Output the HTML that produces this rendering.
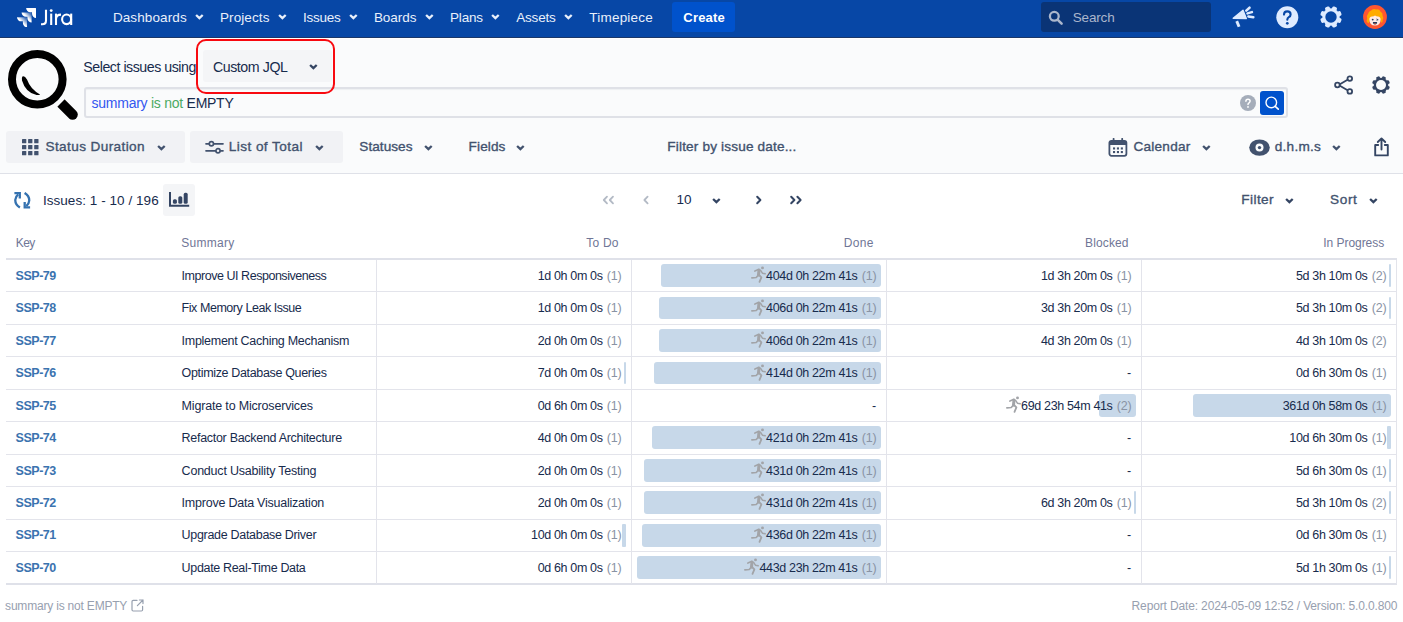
<!DOCTYPE html>
<html><head><meta charset="utf-8"><title>Timepiece - Status Duration</title>
<style>
html,body{margin:0;padding:0}
body{width:1403px;height:622px;overflow:hidden;background:#fff;position:relative;font-family:"Liberation Sans",sans-serif;}
.abs,.t,.bar,.hl,.vl,.run,svg.i{position:absolute}
.t{white-space:pre;line-height:18px;height:18px}
.nav{left:0;top:0;width:1403px;height:37px;background:#0747A6}
.navline{left:0;top:37px;width:1403px;height:1px;background:#1B3768}
.sub{left:0;top:39px;width:1403px;height:134px;background:#FAFBFC}
.subline{left:0;top:173px;width:1403px;height:1px;background:#DFE1E8}
.btn{background:#F1F2F5;border-radius:3px}
.bar{background:#C7D8E9;border-radius:3px}
.hl{left:6px;width:1391px;height:1px;background:#E3E4EB}
.vl{width:1px;top:260px;height:324px;background:#E3E4EB}
</style></head><body>
<svg width="0" height="0" style="position:absolute"><defs>
<symbol id="chev" viewBox="0 0 9 6"><path d="M1.1 1.0 L4.4 4.2 L7.7 1.0" fill="none" stroke="currentColor" stroke-width="2.3" stroke-linecap="butt" stroke-linejoin="miter"/></symbol>
<symbol id="runner" viewBox="0 0 15 17"><g fill="none" stroke="#A2A4A8" stroke-linecap="round" stroke-linejoin="round"><circle cx="11.5" cy="1.9" r="1.45" fill="#A2A4A8" stroke="none"/><path d="M8 4 L7.5 9" stroke-width="3"/><path d="M3.9 5.1 L7.4 3.5" stroke-width="1.6"/><path d="M9.6 4.3 L11.4 7.2 L14.2 7.8" stroke-width="1.5"/><path d="M7.2 9.4 L5.2 11.5 L0.9 11.9" stroke-width="1.7"/><path d="M8 9 L10.4 11.4 L8.5 15.8" stroke-width="1.8"/></g></symbol>
</defs></svg>

<div class="abs nav"></div><div class="abs navline"></div>
<div class="abs sub"></div><div class="abs subline"></div>

<!-- jira logo -->
<svg class="i" style="left:16.9px;top:8.2px" width="19.2" height="19.2" viewBox="0.7 0.68 21.2 21.2">
<defs><linearGradient id="jg1" x1="15.6" y1="5.8" x2="11.2" y2="10.3" gradientUnits="userSpaceOnUse"><stop offset="0.18" stop-color="#fff" stop-opacity="0.25"/><stop offset="1" stop-color="#fff"/></linearGradient>
<linearGradient id="jg2" x1="10.7" y1="10.9" x2="5.7" y2="15.8" gradientUnits="userSpaceOnUse"><stop offset="0.18" stop-color="#fff" stop-opacity="0.25"/><stop offset="1" stop-color="#fff"/></linearGradient></defs>
<path fill="#fff" d="M21.016.683H10.812a4.607 4.607 0 004.607 4.604h1.88v1.818a4.607 4.607 0 004.607 4.604V1.569a.886.886 0 00-.89-.886z"/>
<path fill="url(#jg1)" d="M15.967 5.768H5.762a4.607 4.607 0 004.607 4.607h1.88v1.815a4.607 4.607 0 004.604 4.604V6.654a.886.886 0 00-.886-.886z"/>
<path fill="url(#jg2)" d="M10.914 10.85H.71a4.607 4.607 0 004.607 4.607h1.886v1.812a4.607 4.607 0 004.598 4.604V11.736a.886.886 0 00-.886-.886z"/>
</svg>
<svg class="i" style="left:40px;top:8px" width="34" height="19" viewBox="40 8 34 19"><g fill="none" stroke="#fff" stroke-width="2.1" stroke-linecap="butt">
<path d="M46 9.8 V20.4 Q46 24.2 42.2 24.2 H41"/>
<path d="M51.2 13.6 V25"/><path d="M56 13.6 V25"/><path d="M56 18.6 Q56.4 14.6 61 14.6"/>
<ellipse cx="66.6" cy="19.3" rx="4.5" ry="4.8"/><path d="M71.2 13.6 V25"/></g><circle cx="51.2" cy="10.6" r="1.45" fill="#fff"/></svg>

<!-- nav chevrons -->
<svg class="i" style="left:195px;top:14px;color:#E9F0FB" width="9" height="6"><use href="#chev"/></svg>
<svg class="i" style="left:277.6px;top:14px;color:#E9F0FB" width="9" height="6"><use href="#chev"/></svg>
<svg class="i" style="left:348.6px;top:14px;color:#E9F0FB" width="9" height="6"><use href="#chev"/></svg>
<svg class="i" style="left:424.6px;top:14px;color:#E9F0FB" width="9" height="6"><use href="#chev"/></svg>
<svg class="i" style="left:491.2px;top:14px;color:#E9F0FB" width="9" height="6"><use href="#chev"/></svg>
<svg class="i" style="left:563.8px;top:14px;color:#E9F0FB" width="9" height="6"><use href="#chev"/></svg>

<div class="abs" style="left:672px;top:2px;width:63.2px;height:30px;border-radius:3px;background:#0052CC"></div>
<!-- search box -->
<div class="abs" style="left:1041px;top:2px;width:170px;height:30px;border-radius:3px;background:#0A3476"></div>
<svg class="i" style="left:1048px;top:9.6px" width="16" height="16" viewBox="0 0 16 16"><circle cx="6.3" cy="6.3" r="4.4" fill="none" stroke="#AAB6CC" stroke-width="2.3"/><path d="M9.8 9.8 L13.6 13.6" stroke="#AAB6CC" stroke-width="2.6" stroke-linecap="round"/></svg>

<!-- megaphone -->
<svg class="i" style="left:1231px;top:6px" width="24" height="22" viewBox="0 0 24 22"><g fill="#DEEBFF" stroke="#DEEBFF" stroke-linejoin="round" stroke-linecap="butt">
<path d="M2.2 12.3 L12 4.3 L15.3 12.6 Z" stroke-width="1.4"/>
<path d="M5.7 15.1 L8.1 20.7" fill="none" stroke-width="2.9"/>
<path d="M15.3 4.6 L18.5 1.7 M16.5 7.4 L20.9 6.1 M17.4 10.4 L22.3 11.2" fill="none" stroke-width="2.5" stroke-linecap="round"/></g></svg>
<!-- help -->
<svg class="i" style="left:1276px;top:5.6px" width="23" height="23" viewBox="0 0 23 23"><circle cx="11.3" cy="11.3" r="11" fill="#DEEBFF"/><path d="M8 8.6 Q8 5.4 11.3 5.4 Q14.6 5.4 14.6 8.4 Q14.6 10.2 12.8 11.2 Q11.3 12 11.3 13.8" fill="none" stroke="#0747A6" stroke-width="2.1" stroke-linecap="round"/><circle cx="11.3" cy="17.3" r="1.35" fill="#0747A6"/></svg>
<!-- gear nav -->
<svg class="i" style="left:1319.1px;top:4.9px" width="24" height="24" viewBox="-12 -12 24 24"><g fill="#DEEBFF"><circle r="8.7"/><rect x="-2.5" y="-10.9" width="5" height="21.8" rx="1.6" transform="rotate(22.5)"/><rect x="-2.5" y="-10.9" width="5" height="21.8" rx="1.6" transform="rotate(67.5)"/><rect x="-2.5" y="-10.9" width="5" height="21.8" rx="1.6" transform="rotate(112.5)"/><rect x="-2.5" y="-10.9" width="5" height="21.8" rx="1.6" transform="rotate(157.5)"/></g><circle r="5.7" fill="#0747A6"/></svg>
<!-- avatar -->
<svg class="i" style="left:1363px;top:4.9px" width="24" height="24" viewBox="0 0 24 24"><circle cx="12" cy="12" r="11.9" fill="#FF5630"/>
<path d="M4.4 17.6 Q3 15.6 4.2 13.4 Q3 11 5 9 Q5.4 6.2 8.2 5.4 Q10.4 3.4 13.2 4.4 Q16.4 4 17.6 6.8 Q20 8 19.6 10.8 Q21 13 19.6 15 Q20 17 18.6 18 L16 12 L8 12 L5.6 18.2Z" fill="#FFAB00"/>
<path d="M6.4 14.6 Q6.2 11.6 9 11.4 Q11 11.2 12 10.4 Q13.4 11.4 15 11.4 Q17.6 11.6 17.6 14.6 Q17.6 20.6 12 20.6 Q6.4 20.6 6.4 14.6Z" fill="#FFEBE6"/>
<circle cx="9.7" cy="14.6" r="0.95" fill="#253858"/><path d="M13.4 14 L15.2 14.7 L13.6 15.4" fill="none" stroke="#253858" stroke-width="0.8"/>
<path d="M9.8 17 H14.2 Q14 19.6 12 19.6 Q10 19.6 9.8 17Z" fill="#253858"/><path d="M10.8 18.8 Q12 17.9 13.2 18.8 Q12 19.9 10.8 18.8Z" fill="#FF5630"/></svg>

<!-- magnifier big -->
<svg class="i" style="left:0;top:42px" width="90" height="84" viewBox="0 42 90 84">
<path d="M57.6 99.6 L72.6 114.6" stroke="#000" stroke-width="10.4" stroke-linecap="round"/>
<path d="M55 97 L61 103" stroke="#FAFBFC" stroke-width="12.5"/>
<circle cx="37.3" cy="79.2" r="25.3" fill="#FAFBFC" stroke="#000" stroke-width="8"/>
<path d="M22.4 76.6 Q24.4 75.2 27 79.6 Q30.6 89.6 40 94.4 Q39.6 95.4 36.6 95 Q25.6 92.6 22 80.4 Q21.6 77.6 22.4 76.6Z" fill="#000"/>
</svg>
<!-- custom jql select + red annotation -->
<div class="abs btn" style="left:202.6px;top:50px;width:129.2px;height:32px;background:#F4F5F7"></div>
<svg class="i" style="left:308.6px;top:63.6px;color:#344563" width="9" height="6"><use href="#chev"/></svg>
<!-- jql input -->
<div class="abs" style="left:84px;top:87.2px;width:1199.6px;height:27px;border:2px solid #DFE1E7;border-radius:3px;background:#FAFBFC;box-shadow:inset 0 1px 1px rgba(9,30,66,.05)"></div>
<div class="abs" style="left:196.2px;top:39.4px;width:135px;height:50.6px;border:2px solid #F80A10;border-radius:10px"></div>
<svg class="i" style="left:1240px;top:95px" width="16" height="16" viewBox="0 0 16 16"><circle cx="8" cy="8" r="8" fill="#A5ADBA"/><path d="M5.9 6.3 Q5.9 4.2 8 4.2 Q10.1 4.2 10.1 6.1 Q10.1 7.2 9 7.9 Q8 8.5 8 9.6" fill="none" stroke="#fff" stroke-width="1.5" stroke-linecap="round"/><circle cx="8" cy="11.9" r="0.95" fill="#fff"/></svg>
<div class="abs" style="left:1260px;top:91px;width:24px;height:24px;border-radius:3px;background:#0052CC"></div>
<svg class="i" style="left:1264px;top:95px" width="16" height="16" viewBox="0 0 16 16"><circle cx="7.3" cy="7.4" r="5.3" fill="none" stroke="#fff" stroke-width="1.4"/><path d="M11.2 11.3 L14.3 14.2" stroke="#fff" stroke-width="1.6" stroke-linecap="round"/></svg>
<!-- share -->
<svg class="i" style="left:1333px;top:74px" width="22" height="22" viewBox="0 0 22 22"><g fill="none" stroke="#344563" stroke-width="1.8"><path d="M15 5.4 L5.6 11 L15 16.6"/><circle cx="16.8" cy="4.6" r="2.3" fill="#FAFBFC"/><circle cx="4.4" cy="11" r="2.3" fill="#FAFBFC"/><circle cx="16.8" cy="17.4" r="2.3" fill="#FAFBFC"/></g></svg>
<!-- gear 2 -->
<svg class="i" style="left:1370.7px;top:74.6px" width="20" height="20" viewBox="-10 -10 20 20"><g fill="#344563"><circle r="7.3"/><rect x="-1.9" y="-9" width="3.8" height="18" rx="1.2" transform="rotate(22.5)"/><rect x="-1.9" y="-9" width="3.8" height="18" rx="1.2" transform="rotate(67.5)"/><rect x="-1.9" y="-9" width="3.8" height="18" rx="1.2" transform="rotate(112.5)"/><rect x="-1.9" y="-9" width="3.8" height="18" rx="1.2" transform="rotate(157.5)"/></g><circle r="5" fill="#FAFBFC"/></svg>

<!-- toolbar buttons -->
<div class="abs btn" style="left:6px;top:131px;width:179px;height:31.6px"></div>
<div class="abs btn" style="left:190.2px;top:131px;width:153px;height:31.6px"></div>
<svg class="i" style="left:21.8px;top:139px" width="17" height="17" viewBox="0 0 17 17"><g fill="#42526E"><rect x="0" y="0" width="4.3" height="4.3" rx=".6"/><rect x="6.1" y="0" width="4.3" height="4.3" rx=".6"/><rect x="12.2" y="0" width="4.3" height="4.3" rx=".6"/><rect x="0" y="6" width="4.3" height="4.3" rx=".6"/><rect x="6.1" y="6" width="4.3" height="4.3" rx=".6"/><rect x="12.2" y="6" width="4.3" height="4.3" rx=".6"/><rect x="0" y="12" width="4.3" height="4.3" rx=".6"/><rect x="6.1" y="12" width="4.3" height="4.3" rx=".6"/><rect x="12.2" y="12" width="4.3" height="4.3" rx=".6"/></g></svg>
<svg class="i" style="left:204.6px;top:139.6px" width="19" height="15" viewBox="0 0 19 15"><g fill="none" stroke="#42526E" stroke-width="1.7" stroke-linecap="round"><path d="M1 3.8 H18 M1 10.8 H18"/><circle cx="6.4" cy="3.8" r="2.1" fill="#F1F2F5"/><circle cx="13" cy="10.8" r="2.1" fill="#F1F2F5"/></g></svg>
<svg class="i" style="left:156.6px;top:144.6px;color:#42526E" width="9" height="6"><use href="#chev"/></svg>
<svg class="i" style="left:314.6px;top:144.6px;color:#42526E" width="9" height="6"><use href="#chev"/></svg>
<svg class="i" style="left:423.8px;top:144.6px;color:#42526E" width="9" height="6"><use href="#chev"/></svg>
<svg class="i" style="left:516.4px;top:144.6px;color:#42526E" width="9" height="6"><use href="#chev"/></svg>
<svg class="i" style="left:1201.8px;top:144.6px;color:#42526E" width="9" height="6"><use href="#chev"/></svg>
<svg class="i" style="left:1332px;top:144.6px;color:#42526E" width="9" height="6"><use href="#chev"/></svg>
<!-- calendar icon -->
<svg class="i" style="left:1108px;top:137.6px" width="20" height="19" viewBox="0 0 20 19"><rect x="1.4" y="2.8" width="17" height="15" rx="2" fill="none" stroke="#42526E" stroke-width="1.8"/><path d="M1.4 4.8 Q1.4 2.8 3.4 2.8 H16.4 Q18.4 2.8 18.4 4.8 V7 H1.4Z" fill="#42526E"/><path d="M5.6 0.8 V3 M14.2 0.8 V3" stroke="#42526E" stroke-width="1.8" stroke-linecap="round"/><g fill="#42526E"><rect x="5" y="9.4" width="2.1" height="2.1"/><rect x="8.9" y="9.4" width="2.1" height="2.1"/><rect x="12.8" y="9.4" width="2.1" height="2.1"/><rect x="5" y="13" width="2.1" height="2.1"/><rect x="8.9" y="13" width="2.1" height="2.1"/><rect x="12.8" y="13" width="2.1" height="2.1"/></g></svg>
<!-- eye icon -->
<svg class="i" style="left:1248.6px;top:138.6px" width="21" height="17" viewBox="0 0 21 17"><ellipse cx="10.5" cy="8.6" rx="10.3" ry="8.2" fill="#42526E"/><circle cx="10.5" cy="8.6" r="4" fill="#FAFBFC"/><circle cx="10.5" cy="8.6" r="1.7" fill="#42526E"/></svg>
<!-- export icon -->
<svg class="i" style="left:1373px;top:137px" width="17" height="20" viewBox="0 0 17 20"><g fill="none" stroke="#344563" stroke-width="1.9" stroke-linejoin="round" stroke-linecap="round"><path d="M5.2 8 H2.2 V18.4 H14.8 V8 H11.8"/><path d="M8.5 12.6 V1.8 M4.8 5 L8.5 1.4 L12.2 5"/></g></svg>

<!-- pager row -->
<svg class="i" style="left:13.6px;top:191.6px" width="17" height="17" viewBox="0 0 17 17"><g fill="none" stroke="#3572B0" stroke-width="2.3"><path d="M5.9 15.6 Q1 12.6 1.3 7.8 Q1.5 4.6 4.2 2.4"/><path d="M0.4 1.2 H5.8 V6.6"/><path d="M10.6 0.9 Q15.5 3.9 15.2 8.7 Q15 11.9 12.3 14.1"/><path d="M16.1 15.3 H10.7 V9.9"/></g></svg>
<div class="abs btn" style="left:163px;top:184px;width:32px;height:32px;background:#F4F5F7"></div>
<svg class="i" style="left:168.6px;top:192.4px" width="21" height="15" viewBox="0 0 21 15"><path d="M1 0 V13.7 H20.2" fill="none" stroke="#344563" stroke-width="2"/><g fill="#344563"><rect x="3.9" y="7.2" width="4" height="4.6" rx="1.6"/><rect x="9.3" y="4.2" width="4" height="7.6" rx="1.6"/><rect x="14.7" y="0.8" width="4" height="11" rx="1.6"/></g></svg>
<!-- pager arrows -->
<svg class="i" style="left:602px;top:195px" width="14" height="10" viewBox="0 0 14 10"><path d="M5 1.7 L1.8 5 L5 8.3 M11 1.7 L7.8 5 L11 8.3" fill="none" stroke="#B3BAC5" stroke-width="1.8" stroke-linecap="round" stroke-linejoin="round"/></svg>
<svg class="i" style="left:642px;top:195px" width="8" height="10" viewBox="0 0 8 10"><path d="M5.6 1.7 L2.4 5 L5.6 8.3" fill="none" stroke="#B3BAC5" stroke-width="1.8" stroke-linecap="round" stroke-linejoin="round"/></svg>
<svg class="i" style="left:712.4px;top:197.6px;color:#344563" width="9" height="6"><use href="#chev"/></svg>
<svg class="i" style="left:755px;top:195px" width="8" height="10" viewBox="0 0 8 10"><path d="M2.2 1.7 L5.4 5 L2.2 8.3" fill="none" stroke="#344563" stroke-width="2" stroke-linecap="round" stroke-linejoin="round"/></svg>
<svg class="i" style="left:789px;top:195px" width="14" height="10" viewBox="0 0 14 10"><path d="M2.2 1.7 L5.4 5 L2.2 8.3 M8.4 1.7 L11.6 5 L8.4 8.3" fill="none" stroke="#344563" stroke-width="2" stroke-linecap="round" stroke-linejoin="round"/></svg>
<svg class="i" style="left:1284.6px;top:197.6px;color:#344563" width="9" height="6"><use href="#chev"/></svg>
<svg class="i" style="left:1368.8px;top:197.6px;color:#344563" width="9" height="6"><use href="#chev"/></svg>

<!-- table frame -->
<div class="abs" style="left:6px;top:258px;width:1391px;height:2px;background:#DFE1E9"></div>
<div class="abs" style="left:6px;top:583.4px;width:1391px;height:2px;background:#DFE1E9"></div>
<div class="vl" style="left:376px"></div><div class="vl" style="left:631px"></div><div class="vl" style="left:886px"></div><div class="vl" style="left:1141px"></div><div class="vl" style="left:1396px"></div>
<div class="hl" style="top:291.4px"></div>
<div class="hl" style="top:323.9px"></div>
<div class="hl" style="top:356.4px"></div>
<div class="hl" style="top:388.8px"></div>
<div class="hl" style="top:421.2px"></div>
<div class="hl" style="top:453.7px"></div>
<div class="hl" style="top:486.2px"></div>
<div class="hl" style="top:518.6px"></div>
<div class="hl" style="top:551.0px"></div>
<div class="bar" style="left:661.0px;top:264.1px;width:220.0px;height:22.9px"></div>
<svg class="run" style="left:750.6px;top:266.1px" width="15" height="17" viewBox="0 0 15 17"><use href="#runner"/></svg>
<div class="bar" style="left:1389.0px;top:264.1px;width:2.0px;height:22.9px;border-radius:1px"></div>
<div class="bar" style="left:659.0px;top:296.6px;width:222.0px;height:22.9px"></div>
<svg class="run" style="left:750.6px;top:298.6px" width="15" height="17" viewBox="0 0 15 17"><use href="#runner"/></svg>
<div class="bar" style="left:1389.0px;top:296.6px;width:2.0px;height:22.9px;border-radius:1px"></div>
<div class="bar" style="left:659.0px;top:329.0px;width:222.0px;height:22.9px"></div>
<svg class="run" style="left:750.6px;top:331.0px" width="15" height="17" viewBox="0 0 15 17"><use href="#runner"/></svg>
<div class="bar" style="left:624.0px;top:361.5px;width:2.0px;height:22.9px;border-radius:1px"></div>
<div class="bar" style="left:654.0px;top:361.5px;width:227.0px;height:22.9px"></div>
<svg class="run" style="left:750.6px;top:363.5px" width="15" height="17" viewBox="0 0 15 17"><use href="#runner"/></svg>
<div class="bar" style="left:1099.0px;top:393.9px;width:37.0px;height:22.9px"></div>
<svg class="run" style="left:1005.6px;top:395.9px" width="15" height="17" viewBox="0 0 15 17"><use href="#runner"/></svg>
<div class="bar" style="left:1193.0px;top:393.9px;width:198.0px;height:22.9px"></div>
<div class="bar" style="left:652.0px;top:426.4px;width:229.0px;height:22.9px"></div>
<svg class="run" style="left:750.6px;top:428.4px" width="15" height="17" viewBox="0 0 15 17"><use href="#runner"/></svg>
<div class="bar" style="left:1386.5px;top:426.4px;width:4.5px;height:22.9px;border-radius:1px"></div>
<div class="bar" style="left:644.0px;top:458.8px;width:237.0px;height:22.9px"></div>
<svg class="run" style="left:750.6px;top:460.8px" width="15" height="17" viewBox="0 0 15 17"><use href="#runner"/></svg>
<div class="bar" style="left:1389.0px;top:458.8px;width:2.0px;height:22.9px;border-radius:1px"></div>
<div class="bar" style="left:644.0px;top:491.3px;width:237.0px;height:22.9px"></div>
<svg class="run" style="left:750.6px;top:493.3px" width="15" height="17" viewBox="0 0 15 17"><use href="#runner"/></svg>
<div class="bar" style="left:1134.0px;top:491.3px;width:2.0px;height:22.9px;border-radius:1px"></div>
<div class="bar" style="left:1389.0px;top:491.3px;width:2.0px;height:22.9px;border-radius:1px"></div>
<div class="bar" style="left:621.5px;top:523.7px;width:4.5px;height:22.9px;border-radius:1px"></div>
<div class="bar" style="left:642.0px;top:523.7px;width:239.0px;height:22.9px"></div>
<svg class="run" style="left:750.6px;top:525.7px" width="15" height="17" viewBox="0 0 15 17"><use href="#runner"/></svg>
<div class="bar" style="left:637.0px;top:556.1px;width:244.0px;height:22.9px"></div>
<svg class="run" style="left:744.0px;top:558.2px" width="15" height="17" viewBox="0 0 15 17"><use href="#runner"/></svg>
<div class="bar" style="left:1389.0px;top:556.1px;width:2.0px;height:22.9px;border-radius:1px"></div>
<span class="t" style="left:112.9px;top:8.6px;font-size:13.5px;color:#E9F0FB;letter-spacing:0.110px">Dashboards</span>
<span class="t" style="left:220.0px;top:8.6px;font-size:13.5px;color:#E9F0FB;letter-spacing:0.090px">Projects</span>
<span class="t" style="left:303.0px;top:8.6px;font-size:13.5px;color:#E9F0FB;letter-spacing:-0.255px">Issues</span>
<span class="t" style="left:373.9px;top:8.6px;font-size:13.5px;color:#E9F0FB;letter-spacing:-0.030px">Boards</span>
<span class="t" style="left:450.0px;top:8.6px;font-size:13.5px;color:#E9F0FB;letter-spacing:-0.176px">Plans</span>
<span class="t" style="left:516.3px;top:8.6px;font-size:13.5px;color:#E9F0FB;letter-spacing:-0.219px">Assets</span>
<span class="t" style="left:589.3px;top:8.6px;font-size:13.5px;color:#E9F0FB;letter-spacing:0.213px">Timepiece</span>
<span class="t" style="left:683.3px;top:8.6px;font-size:13px;color:#FFFFFF;letter-spacing:0.205px;font-weight:700">Create</span>
<span class="t" style="left:1072.8px;top:9.0px;font-size:13.5px;color:#AAB6CC;letter-spacing:-0.180px">Search</span>
<span class="t" style="left:83.3px;top:57.8px;font-size:14.2px;color:#172B4D;letter-spacing:-0.466px">Select issues using</span>
<span class="t" style="left:212.9px;top:57.8px;font-size:14.2px;color:#172B4D;letter-spacing:-0.424px">Custom JQL</span>
<span class="t" style="left:91.6px;top:94.4px;font-size:14px;color:#172B4D;letter-spacing:-0.257px"><span style="color:#3257F0">summary</span> <span style="color:#4BAA63">is not</span> EMPTY</span>
<span class="t" style="left:45.5px;top:138.3px;font-size:13.6px;color:#42526E;letter-spacing:0.386px;-webkit-text-stroke:0.35px currentColor">Status Duration</span>
<span class="t" style="left:228.8px;top:138.3px;font-size:13.6px;color:#42526E;letter-spacing:0.430px;-webkit-text-stroke:0.35px currentColor">List of Total</span>
<span class="t" style="left:359.3px;top:138.3px;font-size:13.6px;color:#42526E;letter-spacing:0.037px;-webkit-text-stroke:0.35px currentColor">Statuses</span>
<span class="t" style="left:468.6px;top:138.3px;font-size:13.6px;color:#42526E;letter-spacing:0.106px;-webkit-text-stroke:0.35px currentColor">Fields</span>
<span class="t" style="left:667.3px;top:138.3px;font-size:13.6px;color:#42526E;letter-spacing:0.164px;-webkit-text-stroke:0.35px currentColor">Filter by issue date...</span>
<span class="t" style="left:1133.5px;top:138.3px;font-size:13.6px;color:#42526E;letter-spacing:0.229px;-webkit-text-stroke:0.35px currentColor">Calendar</span>
<span class="t" style="left:1274.8px;top:138.3px;font-size:13.6px;color:#42526E;letter-spacing:0.232px;-webkit-text-stroke:0.35px currentColor">d.h.m.s</span>
<span class="t" style="left:42.9px;top:191.6px;font-size:13.5px;color:#172B4D;letter-spacing:0.049px">Issues: 1 - 10 / 196</span>
<span class="t" style="left:676.6px;top:191.4px;font-size:13.5px;color:#172B4D;letter-spacing:-0.066px">10</span>
<span class="t" style="left:1241.3px;top:190.7px;font-size:13.6px;color:#42526E;letter-spacing:0.414px;-webkit-text-stroke:0.35px currentColor">Filter</span>
<span class="t" style="left:1330.0px;top:190.7px;font-size:13.6px;color:#42526E;letter-spacing:0.641px;-webkit-text-stroke:0.35px currentColor">Sort</span>
<span class="t" style="left:15.8px;top:234.4px;font-size:12px;color:#707696;letter-spacing:-0.663px">Key</span>
<span class="t" style="left:181.3px;top:234.4px;font-size:12px;color:#707696;letter-spacing:0.265px">Summary</span>
<span class="t" style="left:586.3px;top:234.4px;font-size:12px;color:#707696;letter-spacing:0.208px">To Do</span>
<span class="t" style="left:843.8px;top:234.4px;font-size:12px;color:#707696;letter-spacing:0.353px">Done</span>
<span class="t" style="left:1085.0px;top:234.4px;font-size:12px;color:#707696;letter-spacing:0.142px">Blocked</span>
<span class="t" style="left:1323.3px;top:234.4px;font-size:12px;color:#707696;letter-spacing:-0.051px">In Progress</span>
<span class="t" style="left:5.1px;top:597.4px;font-size:12px;color:#97A0AF;letter-spacing:-0.197px">summary is not EMPTY</span>
<span class="t" style="left:1131.6px;top:597.4px;font-size:12px;color:#97A0AF;letter-spacing:-0.143px">Report Date: 2024-05-09 12:52 / Version: 5.0.0.800</span>
<span class="t" style="left:15.6px;top:266.8px;font-size:12.5px;color:#3B73AF;letter-spacing:-0.482px;font-weight:700">SSP-79</span>
<span class="t" style="left:181.6px;top:266.8px;font-size:12.5px;color:#172B4D;letter-spacing:-0.465px">Improve UI Responsiveness</span>
<span class="t" style="right:781.6px;top:266.8px;font-size:12.5px;color:#8993A4;letter-spacing:-0.227px">(1)</span>
<span class="t" style="right:800.4px;top:266.8px;font-size:12.5px;color:#172B4D;letter-spacing:-0.352px">1d 0h 0m 0s</span>
<span class="t" style="right:526.6px;top:266.8px;font-size:12.5px;color:#8993A4;letter-spacing:-0.227px">(1)</span>
<span class="t" style="right:545.5px;top:266.8px;font-size:12.5px;color:#172B4D;letter-spacing:-0.347px">404d 0h 22m 41s</span>
<span class="t" style="right:271.6px;top:266.8px;font-size:12.5px;color:#8993A4;letter-spacing:-0.227px">(1)</span>
<span class="t" style="right:290.5px;top:266.8px;font-size:12.5px;color:#172B4D;letter-spacing:-0.350px">1d 3h 20m 0s</span>
<span class="t" style="right:16.6px;top:266.8px;font-size:12.5px;color:#8993A4;letter-spacing:-0.227px">(2)</span>
<span class="t" style="right:35.5px;top:266.8px;font-size:12.5px;color:#172B4D;letter-spacing:-0.350px">5d 3h 10m 0s</span>
<span class="t" style="left:15.6px;top:299.3px;font-size:12.5px;color:#3B73AF;letter-spacing:-0.482px;font-weight:700">SSP-78</span>
<span class="t" style="left:181.6px;top:299.3px;font-size:12.5px;color:#172B4D;letter-spacing:-0.449px">Fix Memory Leak Issue</span>
<span class="t" style="right:781.6px;top:299.3px;font-size:12.5px;color:#8993A4;letter-spacing:-0.227px">(1)</span>
<span class="t" style="right:800.4px;top:299.3px;font-size:12.5px;color:#172B4D;letter-spacing:-0.352px">1d 0h 0m 0s</span>
<span class="t" style="right:526.6px;top:299.3px;font-size:12.5px;color:#8993A4;letter-spacing:-0.227px">(1)</span>
<span class="t" style="right:545.5px;top:299.3px;font-size:12.5px;color:#172B4D;letter-spacing:-0.347px">406d 0h 22m 41s</span>
<span class="t" style="right:271.6px;top:299.3px;font-size:12.5px;color:#8993A4;letter-spacing:-0.227px">(1)</span>
<span class="t" style="right:290.5px;top:299.3px;font-size:12.5px;color:#172B4D;letter-spacing:-0.350px">3d 3h 20m 0s</span>
<span class="t" style="right:16.6px;top:299.3px;font-size:12.5px;color:#8993A4;letter-spacing:-0.227px">(2)</span>
<span class="t" style="right:35.5px;top:299.3px;font-size:12.5px;color:#172B4D;letter-spacing:-0.350px">5d 3h 10m 0s</span>
<span class="t" style="left:15.6px;top:331.7px;font-size:12.5px;color:#3B73AF;letter-spacing:-0.482px;font-weight:700">SSP-77</span>
<span class="t" style="left:181.6px;top:331.7px;font-size:12.5px;color:#172B4D;letter-spacing:-0.281px">Implement Caching Mechanism</span>
<span class="t" style="right:781.6px;top:331.7px;font-size:12.5px;color:#8993A4;letter-spacing:-0.227px">(1)</span>
<span class="t" style="right:800.4px;top:331.7px;font-size:12.5px;color:#172B4D;letter-spacing:-0.352px">2d 0h 0m 0s</span>
<span class="t" style="right:526.6px;top:331.7px;font-size:12.5px;color:#8993A4;letter-spacing:-0.227px">(1)</span>
<span class="t" style="right:545.5px;top:331.7px;font-size:12.5px;color:#172B4D;letter-spacing:-0.347px">406d 0h 22m 41s</span>
<span class="t" style="right:271.6px;top:331.7px;font-size:12.5px;color:#8993A4;letter-spacing:-0.227px">(1)</span>
<span class="t" style="right:290.5px;top:331.7px;font-size:12.5px;color:#172B4D;letter-spacing:-0.350px">4d 3h 20m 0s</span>
<span class="t" style="right:16.6px;top:331.7px;font-size:12.5px;color:#8993A4;letter-spacing:-0.227px">(2)</span>
<span class="t" style="right:35.5px;top:331.7px;font-size:12.5px;color:#172B4D;letter-spacing:-0.350px">4d 3h 10m 0s</span>
<span class="t" style="left:15.6px;top:364.2px;font-size:12.5px;color:#3B73AF;letter-spacing:-0.482px;font-weight:700">SSP-76</span>
<span class="t" style="left:181.6px;top:364.2px;font-size:12.5px;color:#172B4D;letter-spacing:-0.342px">Optimize Database Queries</span>
<span class="t" style="right:781.6px;top:364.2px;font-size:12.5px;color:#8993A4;letter-spacing:-0.227px">(1)</span>
<span class="t" style="right:800.4px;top:364.2px;font-size:12.5px;color:#172B4D;letter-spacing:-0.352px">7d 0h 0m 0s</span>
<span class="t" style="right:526.6px;top:364.2px;font-size:12.5px;color:#8993A4;letter-spacing:-0.227px">(1)</span>
<span class="t" style="right:545.5px;top:364.2px;font-size:12.5px;color:#172B4D;letter-spacing:-0.347px">414d 0h 22m 41s</span>
<span class="t" style="right:271.6px;top:364.2px;font-size:12.5px;color:#172B4D;letter-spacing:0.228px">-</span>
<span class="t" style="right:16.6px;top:364.2px;font-size:12.5px;color:#8993A4;letter-spacing:-0.227px">(1)</span>
<span class="t" style="right:35.5px;top:364.2px;font-size:12.5px;color:#172B4D;letter-spacing:-0.350px">0d 6h 30m 0s</span>
<span class="t" style="left:15.6px;top:396.6px;font-size:12.5px;color:#3B73AF;letter-spacing:-0.482px;font-weight:700">SSP-75</span>
<span class="t" style="left:181.6px;top:396.6px;font-size:12.5px;color:#172B4D;letter-spacing:-0.177px">Migrate to Microservices</span>
<span class="t" style="right:781.6px;top:396.6px;font-size:12.5px;color:#8993A4;letter-spacing:-0.227px">(1)</span>
<span class="t" style="right:800.4px;top:396.6px;font-size:12.5px;color:#172B4D;letter-spacing:-0.352px">0d 6h 0m 0s</span>
<span class="t" style="right:526.6px;top:396.6px;font-size:12.5px;color:#172B4D;letter-spacing:0.228px">-</span>
<span class="t" style="right:271.6px;top:396.6px;font-size:12.5px;color:#8993A4;letter-spacing:-0.227px">(2)</span>
<span class="t" style="right:290.5px;top:396.6px;font-size:12.5px;color:#172B4D;letter-spacing:-0.347px">69d 23h 54m 41s</span>
<span class="t" style="right:16.6px;top:396.6px;font-size:12.5px;color:#8993A4;letter-spacing:-0.227px">(1)</span>
<span class="t" style="right:35.5px;top:396.6px;font-size:12.5px;color:#172B4D;letter-spacing:-0.348px">361d 0h 58m 0s</span>
<span class="t" style="left:15.6px;top:429.1px;font-size:12.5px;color:#3B73AF;letter-spacing:-0.482px;font-weight:700">SSP-74</span>
<span class="t" style="left:181.6px;top:429.1px;font-size:12.5px;color:#172B4D;letter-spacing:-0.298px">Refactor Backend Architecture</span>
<span class="t" style="right:781.6px;top:429.1px;font-size:12.5px;color:#8993A4;letter-spacing:-0.227px">(1)</span>
<span class="t" style="right:800.4px;top:429.1px;font-size:12.5px;color:#172B4D;letter-spacing:-0.352px">4d 0h 0m 0s</span>
<span class="t" style="right:526.6px;top:429.1px;font-size:12.5px;color:#8993A4;letter-spacing:-0.227px">(1)</span>
<span class="t" style="right:545.5px;top:429.1px;font-size:12.5px;color:#172B4D;letter-spacing:-0.347px">421d 0h 22m 41s</span>
<span class="t" style="right:271.6px;top:429.1px;font-size:12.5px;color:#172B4D;letter-spacing:0.228px">-</span>
<span class="t" style="right:16.6px;top:429.1px;font-size:12.5px;color:#8993A4;letter-spacing:-0.227px">(1)</span>
<span class="t" style="right:35.5px;top:429.1px;font-size:12.5px;color:#172B4D;letter-spacing:-0.349px">10d 6h 30m 0s</span>
<span class="t" style="left:15.6px;top:461.5px;font-size:12.5px;color:#3B73AF;letter-spacing:-0.482px;font-weight:700">SSP-73</span>
<span class="t" style="left:181.6px;top:461.5px;font-size:12.5px;color:#172B4D;letter-spacing:-0.217px">Conduct Usability Testing</span>
<span class="t" style="right:781.6px;top:461.5px;font-size:12.5px;color:#8993A4;letter-spacing:-0.227px">(1)</span>
<span class="t" style="right:800.4px;top:461.5px;font-size:12.5px;color:#172B4D;letter-spacing:-0.352px">2d 0h 0m 0s</span>
<span class="t" style="right:526.6px;top:461.5px;font-size:12.5px;color:#8993A4;letter-spacing:-0.227px">(1)</span>
<span class="t" style="right:545.5px;top:461.5px;font-size:12.5px;color:#172B4D;letter-spacing:-0.347px">431d 0h 22m 41s</span>
<span class="t" style="right:271.6px;top:461.5px;font-size:12.5px;color:#172B4D;letter-spacing:0.228px">-</span>
<span class="t" style="right:16.6px;top:461.5px;font-size:12.5px;color:#8993A4;letter-spacing:-0.227px">(1)</span>
<span class="t" style="right:35.5px;top:461.5px;font-size:12.5px;color:#172B4D;letter-spacing:-0.350px">5d 6h 30m 0s</span>
<span class="t" style="left:15.6px;top:494.0px;font-size:12.5px;color:#3B73AF;letter-spacing:-0.482px;font-weight:700">SSP-72</span>
<span class="t" style="left:181.6px;top:494.0px;font-size:12.5px;color:#172B4D;letter-spacing:-0.230px">Improve Data Visualization</span>
<span class="t" style="right:781.6px;top:494.0px;font-size:12.5px;color:#8993A4;letter-spacing:-0.227px">(1)</span>
<span class="t" style="right:800.4px;top:494.0px;font-size:12.5px;color:#172B4D;letter-spacing:-0.352px">2d 0h 0m 0s</span>
<span class="t" style="right:526.6px;top:494.0px;font-size:12.5px;color:#8993A4;letter-spacing:-0.227px">(1)</span>
<span class="t" style="right:545.5px;top:494.0px;font-size:12.5px;color:#172B4D;letter-spacing:-0.347px">431d 0h 22m 41s</span>
<span class="t" style="right:271.6px;top:494.0px;font-size:12.5px;color:#8993A4;letter-spacing:-0.227px">(1)</span>
<span class="t" style="right:290.5px;top:494.0px;font-size:12.5px;color:#172B4D;letter-spacing:-0.350px">6d 3h 20m 0s</span>
<span class="t" style="right:16.6px;top:494.0px;font-size:12.5px;color:#8993A4;letter-spacing:-0.227px">(2)</span>
<span class="t" style="right:35.5px;top:494.0px;font-size:12.5px;color:#172B4D;letter-spacing:-0.350px">5d 3h 10m 0s</span>
<span class="t" style="left:15.6px;top:526.4px;font-size:12.5px;color:#3B73AF;letter-spacing:-0.482px;font-weight:700">SSP-71</span>
<span class="t" style="left:181.6px;top:526.4px;font-size:12.5px;color:#172B4D;letter-spacing:-0.307px">Upgrade Database Driver</span>
<span class="t" style="right:781.6px;top:526.4px;font-size:12.5px;color:#8993A4;letter-spacing:-0.227px">(1)</span>
<span class="t" style="right:800.4px;top:526.4px;font-size:12.5px;color:#172B4D;letter-spacing:-0.350px">10d 0h 0m 0s</span>
<span class="t" style="right:526.6px;top:526.4px;font-size:12.5px;color:#8993A4;letter-spacing:-0.227px">(1)</span>
<span class="t" style="right:545.5px;top:526.4px;font-size:12.5px;color:#172B4D;letter-spacing:-0.347px">436d 0h 22m 41s</span>
<span class="t" style="right:271.6px;top:526.4px;font-size:12.5px;color:#172B4D;letter-spacing:0.228px">-</span>
<span class="t" style="right:16.6px;top:526.4px;font-size:12.5px;color:#8993A4;letter-spacing:-0.227px">(1)</span>
<span class="t" style="right:35.5px;top:526.4px;font-size:12.5px;color:#172B4D;letter-spacing:-0.350px">0d 6h 30m 0s</span>
<span class="t" style="left:15.6px;top:558.9px;font-size:12.5px;color:#3B73AF;letter-spacing:-0.482px;font-weight:700">SSP-70</span>
<span class="t" style="left:181.6px;top:558.9px;font-size:12.5px;color:#172B4D;letter-spacing:-0.331px">Update Real-Time Data</span>
<span class="t" style="right:781.6px;top:558.9px;font-size:12.5px;color:#8993A4;letter-spacing:-0.227px">(1)</span>
<span class="t" style="right:800.4px;top:558.9px;font-size:12.5px;color:#172B4D;letter-spacing:-0.352px">0d 6h 0m 0s</span>
<span class="t" style="right:526.6px;top:558.9px;font-size:12.5px;color:#8993A4;letter-spacing:-0.227px">(1)</span>
<span class="t" style="right:545.5px;top:558.9px;font-size:12.5px;color:#172B4D;letter-spacing:-0.346px">443d 23h 22m 41s</span>
<span class="t" style="right:271.6px;top:558.9px;font-size:12.5px;color:#172B4D;letter-spacing:0.228px">-</span>
<span class="t" style="right:16.6px;top:558.9px;font-size:12.5px;color:#8993A4;letter-spacing:-0.227px">(1)</span>
<span class="t" style="right:35.5px;top:558.9px;font-size:12.5px;color:#172B4D;letter-spacing:-0.350px">5d 1h 30m 0s</span>
<!-- footer link icon -->
<svg class="i" style="left:130.6px;top:598.8px" width="13" height="13" viewBox="0 0 13 13"><g fill="none" stroke="#97A0AF" stroke-width="1.2" stroke-linecap="round" stroke-linejoin="round"><path d="M6 1.4 H2.2 Q1 1.4 1 2.6 V10.8 Q1 12 2.2 12 H10.4 Q11.6 12 11.6 10.8 V7.4"/><path d="M8.4 1 H12 V4.6 M12 1 L6.4 6.6"/></g></svg>
</body></html>
